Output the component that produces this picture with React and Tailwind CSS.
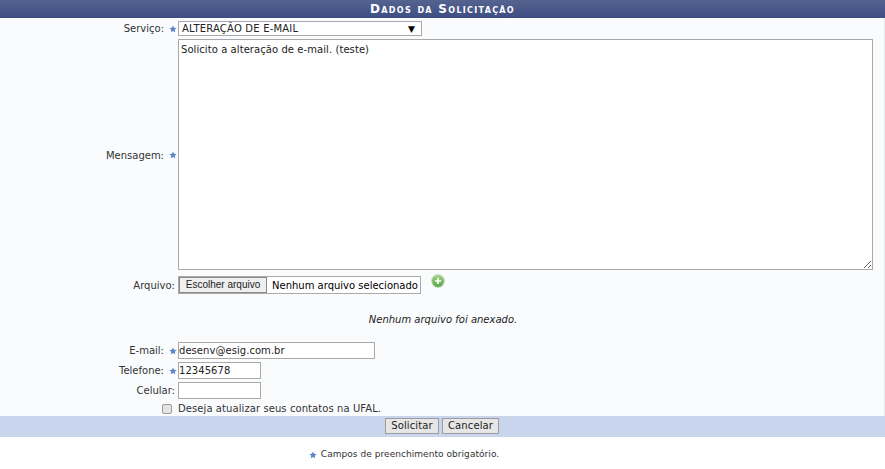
import React from 'react';

const Star = () => (
  <svg viewBox="0 0 10 10" className="w-[8px] h-[8px]">
    <path d="M5 .5 6.3 3.4 9.5 3.7 7.1 5.8 7.8 9 5 7.4 2.2 9 2.9 5.8.5 3.7 3.7 3.4Z" fill="#5a84c8" />
  </svg>
);

const Row = ({ label, required, nudge, className = '', children }) => (
  <div className={`flex ${className}`}>
    {required ? (
      <>
        <div className={`w-[165px] shrink-0 text-right pr-px text-[#333] ${nudge ? 'pt-px' : ''}`}>{label}</div>
        <div className="w-[13px] shrink-0 flex justify-center pl-[2px] pt-px">
          <Star />
        </div>
      </>
    ) : (
      <div className={`w-[178px] shrink-0 text-right pr-[3px] text-[#333] ${nudge ? 'pt-px' : ''}`}>{label}</div>
    )}
    {children}
  </div>
);

const inputCls = 'h-[17px] border border-[#a9a9a9] bg-white px-0 text-[10px] tracking-[0.05px] leading-none text-[#222] outline-none';

export default function App() {
  return (
    <div className="w-[885px] h-[469px] bg-white overflow-hidden text-[10px] text-[#222] font-['DejaVu_Sans','Liberation_Sans',sans-serif]">
      <div className="h-[18px] bg-gradient-to-b from-[#55638f] to-[#3e4e84] text-white text-center font-bold text-[12px] leading-[19px] tracking-[1.3px] [font-variant:small-caps]">
        Dados da Solicitação
      </div>

      <div className="h-[398px] bg-[#f9fbfd] border-r border-[#e6eaf2] pt-[3px]">
        <Row label="Serviço:" required className="items-center h-[15px]">
          <div className="w-[244px] h-[15px] border border-[#a9a9a9] bg-white flex items-center justify-between pl-[3px] pr-[6px] pt-px leading-none tracking-[0.2px]">
            <span>ALTERAÇÃO DE E-MAIL</span>
            <span className="text-[9px] text-black">▼</span>
          </div>
        </Row>

        <Row label="Mensagem:" required nudge className="items-center mt-[3px] h-[231px]">
          <textarea
            readOnly
            className="w-[695px] h-[231px] border border-[#a9a9a9] bg-white px-[2px] pt-[3px] text-[10px] tracking-[0.07px] leading-[13px] text-[#222] outline-none resize-y"
            defaultValue="Solicito a alteração de e-mail. (teste)"
          />
        </Row>

        <div className="flex mt-[6px] h-[20px]">
          <Row label="Arquivo:" nudge className="items-center h-[18px]">
            <div className="w-[243px] h-[18px] border border-[#a9a9a9] bg-white flex items-center">
              <button className="w-[88px] h-[16px] shrink-0 whitespace-nowrap bg-[#efefef] border border-[#8a8a8a] text-[10px] leading-none text-[#222] font-['Liberation_Sans',sans-serif]">
                Escolher arquivo
              </button>
              <span className="ml-[5px] whitespace-nowrap text-[10px] text-black">Nenhum arquivo selecionado</span>
            </div>
          </Row>
          <svg viewBox="0 0 14 14" className="w-[14px] h-[14px] ml-[10px] -mt-[2px]">
            <defs>
              <linearGradient id="plusFill" x1="0" y1="0" x2="0" y2="1">
                <stop offset="0" stopColor="#a8d690" />
                <stop offset="1" stopColor="#56a042" />
              </linearGradient>
            </defs>
            <circle cx="7" cy="7" r="6.3" fill="url(#plusFill)" stroke="#b9d8ae" strokeWidth="0.8" />
            <path d="M7 4v6M4 7h6" stroke="#fff" strokeWidth="1.7" />
          </svg>
        </div>

        <p className="text-center italic mt-[17px] leading-[13px] text-[#222] pl-[2px]">Nenhum arquivo foi anexado.</p>

        <div className="mt-[16px] flex flex-col gap-[3px]">
          <Row label="E-mail:" required className="items-center">
            <input readOnly className={`${inputCls} w-[197px]`} value="desenv@esig.com.br" />
          </Row>
          <Row label="Telefone:" required className="items-center">
            <input readOnly className={`${inputCls} w-[83px]`} value="12345678" />
          </Row>
          <Row label="Celular:" className="items-center">
            <input readOnly className={`${inputCls} w-[83px]`} value="" />
          </Row>
        </div>

        <div className="flex items-center mt-[3px] h-[13px]">
          <div className="w-[162px] shrink-0" />
          <div className="w-[10px] h-[10px] rounded-[2px] border border-[#9a9a9a] bg-[#e4e4e4]" />
          <span className="ml-[6px] text-[#333] tracking-[0.08px]">Deseja atualizar seus contatos na UFAL.</span>
        </div>
      </div>

      <div className="h-[21px] bg-[#c8d5ec] flex items-center justify-center gap-[3px] pb-[1px] pr-[1px]">
        <button className="h-[16px] w-[54px] bg-[#e6e6e6] border border-[#9c9c9c] text-[10px] tracking-[0.1px] leading-none text-[#222]">Solicitar</button>
        <button className="h-[16px] w-[57px] bg-[#e6e6e6] border border-[#9c9c9c] text-[10px] tracking-[0.1px] leading-none text-[#222]">Cancelar</button>
      </div>

      <div className="flex items-center justify-center gap-[4px] mt-[11px] text-[9px] tracking-[0.05px] text-[#333] leading-[13px] pr-[77px]">
        <Star />
        <span>Campos de preenchimento obrigatório.</span>
      </div>
    </div>
  );
}
